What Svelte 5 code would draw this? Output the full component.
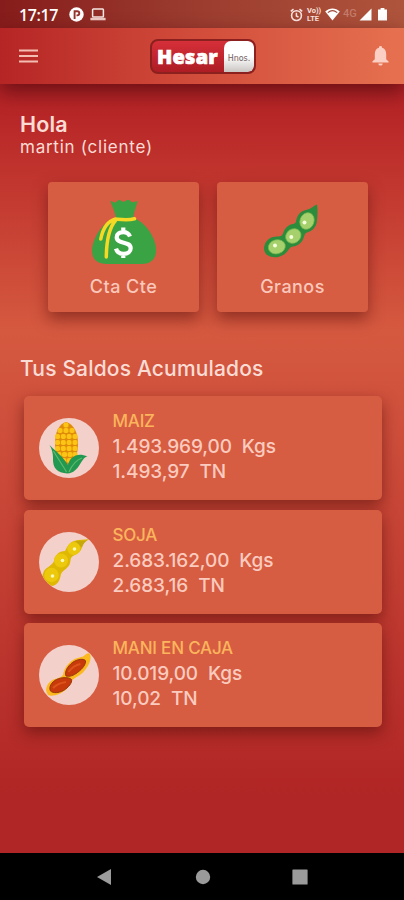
<script>
  const shortcuts = [
    { icon: "bag", label: "Cta Cte" },
    { icon: "pod", label: "Granos" },
  ];

  const balances = [
    { grain: "maiz", name: "MAIZ", kgs: "1.493.969,00", tn: "1.493,97" },
    { grain: "soja", name: "SOJA", kgs: "2.683.162,00", tn: "2.683,16" },
    { grain: "mani", name: "MANI EN CAJA", kgs: "10.019,00", tn: "10,02" },
  ];

  // kernels of the corn cob, row by row
  const kernelRows = [
    { y: 7, xs: [27] },
    { y: 12.5, xs: [21, 27, 33] },
    { y: 18.5, xs: [18.5, 24.3, 30.1, 36] },
    { y: 24.5, xs: [18.5, 24.3, 30.1, 36] },
    { y: 30.5, xs: [18.5, 24.3, 30.1, 36] },
    { y: 36.5, xs: [20, 25.5, 31, 36] },
    { y: 42.5, xs: [25, 30.5] },
  ];
</script>

<div class="phone">
  <div class="status">
    <span class="time">17:17</span>
    <svg class="app-dot" width="15" height="15" viewBox="0 0 15 15">
      <circle cx="7.5" cy="7.5" r="7.2" fill="#fff" />
      <path d="M5.6 12V4.2H8.2A2.1 2.1 0 0 1 8.2 8.4H7.5" fill="none" stroke="#93332c" stroke-width="1.9" />
    </svg>
    <svg class="laptop" width="16" height="13" viewBox="0 0 16 13">
      <rect x="2.6" y="1" width="10.8" height="8" rx=".8" fill="none" stroke="#f8e7e3" stroke-width="1.5" />
      <path d="M.4 9.800h15.200v2.500H.4z" fill="#eec9c3" />
    </svg>
    <span class="gap"></span>
    <svg class="alarm" width="13" height="14" viewBox="0 0 13 14">
      <circle cx="6.5" cy="7.6" r="4.9" fill="none" stroke="#fbe3df" stroke-width="1.6" />
      <path d="M.8 3.4 3.5 1.1M12.2 3.4 9.5 1.1M6.4 4.8V8l2.1 1.2" fill="none" stroke="#fbe3df" stroke-width="1.5" />
    </svg>
    <span class="volte"><span>Vo))</span><span>LTE</span></span>
    <svg class="wifi" width="15" height="13" viewBox="0 0 15 13">
      <path d="M.2 3.6C4.4-.4 10.6-.4 14.8 3.6L7.5 12.5z" fill="#fff" />
      <path d="M2.8 4.6c2.8-2.3 6.6-2.3 9.4 0" fill="none" stroke="#a04737" stroke-width="1.1" />
    </svg>
    <span class="net">4G</span>
    <svg class="signal" width="13" height="13" viewBox="0 0 13 13">
      <path d="M.5 12.5h12V.5z" fill="#fff" />
    </svg>
    <svg class="battery" width="9" height="13" viewBox="0 0 9 13">
      <path d="M2.600 0h3.800v1.400H9V12.600H0V1.400h2.600z" fill="#fff" />
    </svg>
  </div>

  <header>
    <svg class="menu" width="19" height="14" viewBox="0 0 19 14">
      <path d="M0 1.500h19M0 7h19M0 12.500h19" stroke="#f3bdb2" stroke-width="1.900" />
    </svg>
    <div class="logo">
      <span class="logo-name">Hesar</span>
      <span class="logo-tag">Hnos.</span>
    </div>
    <svg class="bell" width="17" height="20" viewBox="0 0 17 20">
      <path d="M8.5 0a1.500 1.500 0 0 1 1.500 1.700C12.900 2.400 14.200 5 14.200 8v5.200l2.400 2.400v.9H.4v-.9l2.400-2.400V8C2.800 5 4.100 2.400 7 1.700A1.500 1.500 0 0 1 8.500 0zM6.300 17.400h4.400a2.200 2.200 0 0 1-4.400 0z" fill="#fbcfc3" />
    </svg>
  </header>

  <main>
    <h1>Hola</h1>
    <p class="user">martin (cliente)</p>

    <div class="shortcuts">
      {#each shortcuts as item}
        <button class="shortcut">
          {#if item.icon === "bag"}
            <svg width="64" height="64" viewBox="0 0 64 64">
              <path d="M18.500 1c2 0 2.400 1.600 4.600 1.400C25.300 2.200 25.500-.4 27.600 0c1.800.3 2 1.800 4 1.800S34.200-.3 36.200-.2c2 .1 2.400 2.500 4.500 2.500 1.800 0 2.500-1.700 4.800-1-1.200 5-3.300 10-4.500 17H24c-1-7-3.700-11-5.500-17.300z" fill="#3aa343" />
              <path d="M23 18h18c12 4 20 16 22.500 27 2.500 13-4 19-14 19H15C3 64-1.500 57 .5 46 3 35 11 22 23 18z" fill="#3aa343" />
              <path d="M42.500 18.700C36 20.500 29 19.500 23.500 19 15 21.500 10.500 30 8.800 39M23.500 20.500C16 29 14.500 43 14.300 57" fill="none" stroke="#f5d925" stroke-width="3.500" stroke-linecap="round" />
              <path d="M38 36.500c-1.200-3-3.500-4.300-6.600-4.300-4 0-6.700 1.900-6.700 5 0 7.500 14 3.500 14 11 0 3.400-2.800 5.600-7.200 5.600-3.800 0-6.600-1.800-7.500-5.200M31.300 27.500v5M31.300 53.500v4.500" fill="none" stroke="#fff" stroke-width="4.200" />
            </svg>
          {:else}
            <svg width="64" height="64" viewBox="1 0 64 64">
              <path d="M57 4.500c.8 5 .6 12-.2 17.500-1 5.500-4.500 9-9.700 10.500-2 .5-2.400 2-3.100 4.300-1.600 5.800-5.800 9.200-11 9.800-3 .4-3.800 2.500-5.800 4.800C22.500 57 15 58.700 9.500 56.300 5 54.500 3 50 4.500 45.500 6 39.500 11.500 36.200 18 36.500c3 0 4.400-1 5.300-3.800 1.700-5 5.200-8.200 10-8.700 2-.3 2.500-1.500 3-4 1.600-6.500 5.600-9.500 11.400-10.500C51.500 8.500 54 5.500 57 4.500z" fill="#2b8c3b" />
              <g fill="#a5d06b" stroke="#78b650" stroke-width=".7">
                <ellipse cx="16.800" cy="46.800" rx="8.600" ry="7" transform="rotate(-15 16.800 46.800)" />
                <ellipse cx="33.300" cy="36" rx="8" ry="7" transform="rotate(-35 33.300 36)" />
                <ellipse cx="47" cy="21" rx="7" ry="8.500" transform="rotate(20 47 21)" />
              </g>
              <g fill="#f5ffdc">
                <circle cx="15" cy="45.500" r="2" />
                <circle cx="31.300" cy="37" r="2" />
                <circle cx="44.500" cy="22.500" r="2" />
              </g>
            </svg>
          {/if}
          <span>{item.label}</span>
        </button>
      {/each}
    </div>

    <h2>Tus Saldos Acumulados</h2>

    <div class="balances">
      {#each balances as b}
        <div class="balance">
          <div class="avatar">
            {#if b.grain === "maiz"}
              <svg width="60" height="60" viewBox="0 0 60 60">
                <path d="M27 4c8 2 12 11 12 22 0 11-4 19-10 21-8-2-13-10-13-21C16 14 20 6 27 4z" fill="#e08c0b" />
                {#each kernelRows as row}
                  {#each row.xs as x}
                    <rect x={x - 2.5} y={row.y - 2.6} width="5" height="5.200" rx="1.800" fill="#fcc414" />
                  {/each}
                {/each}
                <path d="M10.500 27c6 6 13 11 18.500 20 2-8 9-13 19.500-8.500-7 1-7.500 16-20 17C18 55 13.500 50 14 40c0-5-1-9-3.500-13z" fill="#239850" />
                <path d="M14.500 33c4 7 9 14 13 21M30 54c3-7 7-12 13-14" fill="none" stroke="#5fba6b" stroke-width="1.200" />
              </svg>
            {:else if b.grain === "soja"}
              <svg width="60" height="60" viewBox="0 0 60 60">
                <path d="M50.500 7C45 8 40 7 35 9c-5 2-7 6-9 10-6 0-10 4-11 10-2 5-8 6-10 10-3 6-2 11 8 15 6-1 8-6 9-12 2-4 8-6 9-11 1-3 0-5 3-7 4-2 8-4 9-9 1-3 2-5 7.500-8z" fill="#dfb804" />
                <path d="M50.500 7C45 10 40 8 36 9.500l7 6c1-3 2.500-6 7.500-8.500z" fill="#c6a80a" />
                <g fill="#ecc90c">
                  <circle cx="34.800" cy="16.500" r="6.500" />
                  <circle cx="22" cy="28.500" r="7" />
                  <circle cx="12.500" cy="43" r="7.200" />
                </g>
                <g fill="#fff8b8">
                  <circle cx="35.500" cy="17" r="1.800" />
                  <circle cx="23.500" cy="28.500" r="1.800" />
                  <circle cx="13.500" cy="44" r="1.800" />
                </g>
              </svg>
            {:else}
              <svg width="60" height="60" viewBox="0 0 60 60">
                <path d="M51 9c2 5-1 12-7 18.500-4 4-9 5-12 9-2 6-6 10-12 12.500-5 2-11 3-12-1-2-4 0-9 4-12 4-3 9-2 12-6 1-6 4-11 10-15 4-3 9-2 12-5 2-2 4-2.500 5-1z" fill="#fbb91d" />
                <g fill="#c83a0b" stroke="#96370d" stroke-width="1">
                  <path d="M27 31c-2-5 3-12 9-15 5-2.500 10-2 10.500 0 .5 3-3 8-8 11.500-4 3-8 4.500-11.500 3.500z" />
                  <path d="M11.500 46c-2-4 1-9 6-11.500 5-2.500 13-2.500 15 0 1 3-3 8-8 11-5 2.500-10 3-13 .5z" />
                </g>
                <path d="M29.500 27c3-4 7-7 12-8M14 43c3-3 7-5 13-6" fill="none" stroke="#dc541a" stroke-width="2" />
              </svg>
            {/if}
          </div>
          <div class="amounts">
            <span class="name">{b.name}</span>
            <span>{b.kgs}&nbsp; Kgs</span>
            <span>{b.tn}&nbsp; TN</span>
          </div>
        </div>
      {/each}
    </div>
  </main>

  <nav>
    <svg width="16" height="16" viewBox="0 0 16 16"><path d="M0 8 14 0v16z" fill="#9b9b9b" /></svg>
    <svg width="16" height="16" viewBox="0 0 16 16"><circle cx="8" cy="8" r="7.200" fill="#9b9b9b" /></svg>
    <svg width="16" height="16" viewBox="0 0 16 16"><rect x=".4" y=".4" width="15.200" height="15.200" rx=".6" fill="#9b9b9b" /></svg>
  </nav>
</div>

<style>
  :global(body) {
    margin: 0;
  }
  .phone {
    display: flex;
    flex-direction: column;
    width: 404px;
    height: 900px;
    overflow: hidden;
    font-family: Inter, "Liberation Sans", sans-serif;
    color: #fbdcd5;
    background: #000;
  }
  .phone svg {
    display: block;
    flex: none;
  }

  .status {
    display: flex;
    align-items: center;
    height: 28px;
    padding: 1px 17px 0 19px;
    box-sizing: border-box;
    background: linear-gradient(90deg, #861c1b, #9a3a2e 45%, #af543c);
    z-index: 1;
  }
  .time {
    width: 50px;
    font: 600 16px "Open Sans", sans-serif;
    letter-spacing: -0.4px;
    color: #fff;
  }
  .laptop {
    margin-left: 6px;
  }
  .gap {
    flex: 1;
  }
  .alarm {
    margin-right: 4px;
  }
  .volte {
    display: flex;
    flex-direction: column;
    width: 16px;
    margin-right: 2px;
    font: 700 7.5px/8px Roboto, sans-serif;
    color: #fbe3df;
  }
  .net {
    width: 15px;
    margin: -3px 1px 0 3px;
    font: 500 11px Roboto, sans-serif;
    color: #c47b69;
  }
  .battery {
    margin-left: 6px;
  }

  header {
    display: flex;
    align-items: center;
    justify-content: space-between;
    height: 56px;
    padding: 0 15px 0 19px;
    box-sizing: border-box;
    background: linear-gradient(90deg, #b52525, #d04a39 45%, #e67150);
    box-shadow: 0 8px 20px 0 rgba(70, 8, 12, 0.65);
    z-index: 1;
  }
  .logo {
    display: flex;
    width: 102px;
    height: 31px;
    margin-right: 4px;
    border: 2px solid #8b201e;
    border-radius: 8px;
    overflow: hidden;
    background: linear-gradient(#d6303a, #ad1c24);
  }
  .logo-name {
    flex: 1;
    padding-left: 5px;
    font: 800 20px/32px "Open Sans", sans-serif;
    letter-spacing: 0.2px;
    color: #fff;
    -webkit-text-stroke: 0.7px #fff;
  }
  .logo-tag {
    width: 30px;
    border-radius: 7px 6px 6px 0;
    font: 8px/36px "DejaVu Sans", sans-serif;
    text-align: center;
    color: #74615f;
    background: linear-gradient(#fff 50%, #c9c5c3);
  }

  main {
    flex: none;
    height: 769px;
    padding: 28px 22px 0 20px;
    box-sizing: border-box;
    background: linear-gradient(#b32226, #b92828 5%, #d5593f 32%, #cf503c 43%, #b02525 93%);
  }
  h1,
  h2,
  p {
    margin: 0;
  }
  h1 {
    font-size: 21.5px;
    font-weight: 600;
    line-height: 25px;
    letter-spacing: 0.2px;
  }
  .user {
    font-size: 17px;
    line-height: 21px;
    letter-spacing: 0.75px;
  }
  .shortcuts {
    display: flex;
    gap: 18px;
    margin: 24px 0 0 28px;
  }
  .shortcut {
    display: flex;
    flex-direction: column;
    align-items: center;
    width: 151px;
    height: 130px;
    padding: 18px 0 0;
    box-sizing: border-box;
    border: none;
    border-radius: 4px;
    background: #d65d42;
    box-shadow: 0 7px 15px rgba(80, 12, 10, 0.5);
    font: 500 18px/22px Inter, sans-serif;
    letter-spacing: 0.45px;
    color: #fbc8bb;
  }
  .shortcut span {
    margin-top: 12px;
  }
  h2 {
    margin-top: 44px;
    font-size: 21px;
    font-weight: 500;
    line-height: 26px;
    letter-spacing: 0.17px;
  }
  .balances {
    display: flex;
    flex-direction: column;
    gap: 9.5px;
    margin: 14px 0 0 3.5px;
  }
  .balance {
    display: flex;
    align-items: center;
    height: 104px;
    padding-left: 15px;
    border-radius: 5px;
    background: #d65d42;
    box-shadow: 0 6px 15px rgba(80, 12, 10, 0.55);
  }
  .avatar {
    width: 60px;
    height: 60px;
    border-radius: 50%;
    overflow: hidden;
    background: #f3d0ca;
  }
  .amounts {
    display: flex;
    flex-direction: column;
    margin: -3px 0 0 14px;
    font-size: 19px;
    font-weight: 450;
    line-height: 25px;
    letter-spacing: -0.08px;
    color: #fbcbbf;
  }
  .name {
    font-size: 17px;
    font-weight: 500;
    letter-spacing: -0.2px;
    color: #fcb55c;
  }

  nav {
    display: flex;
    align-items: center;
    justify-content: space-between;
    height: 47px;
    padding: 0 96px 0 97px;
    background: #000;
  }
</style>
